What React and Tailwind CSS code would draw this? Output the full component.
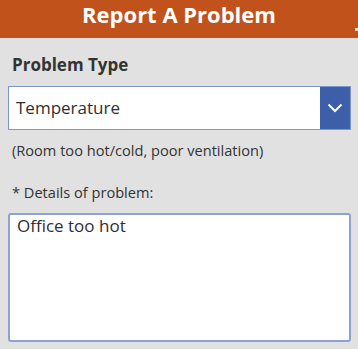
export default function App() {
  return (
    <div className="w-[358px] h-[349px] bg-[#e1e1e1] overflow-hidden" style={{ fontFamily: '"Open Sans", sans-serif' }}>
      <div className="h-[38px] bg-[#c1521c] relative flex items-start justify-center">
        <div className="text-white font-bold text-[22px] leading-[29px]">Report A Problem</div>
        <div className="absolute right-0 top-[28px] w-[3px] h-[3px] bg-[#f3d3c3]" />
      </div>
      <div className="px-[8px]">
        <div className="pl-[4px] pt-[15px] text-[17px] leading-[24px] font-bold text-[#333333]">Problem Type</div>
        <div className="mt-[9px] h-[44px] w-[343px] bg-white border border-[#7f95cf] flex">
          <div className="flex-1 flex items-center pl-[7px] text-[17px] text-[#2f2f2f]">Temperature</div>
          <div className="w-[30px] bg-[#3d5ea8] flex items-center justify-center">
            <svg width="16" height="10" viewBox="0 0 16 10" fill="none">
              <path d="M1.5 1.5 L8 8 L14.5 1.5" stroke="white" strokeWidth="2" />
            </svg>
          </div>
        </div>
        <div className="pl-[4px] mt-[10px] text-[14.6px] leading-[20px] text-[#333333]">(Room too hot/cold, poor ventilation)</div>
        <div className="pl-[4px] mt-[22px] text-[14.6px] leading-[20px] text-[#333333]">* Details of problem:</div>
        <div className="mt-[11px] h-[129px] w-[343px] bg-white border-2 border-[#8ea1d4] rounded-[3px] pl-[7px] text-[17px] leading-[22px] text-[#2f2f2f]">
          Office too hot
        </div>
      </div>
    </div>
  );
}
